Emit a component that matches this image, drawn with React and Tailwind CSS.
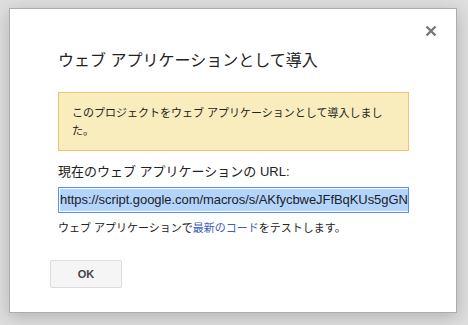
const FONT = { fontFamily: '"Liberation Sans", "Noto Sans CJK JP", sans-serif' };

const App = () => {
  return (
    <div className="w-[468px] h-[325px] bg-[#dedede] pt-[8px] pl-[9px] overflow-hidden" style={FONT}>
      <div className="relative w-[448px] h-[305px] bg-white border border-[#acacac] shadow-[0_4px_16px_rgba(0,0,0,0.2)]">
        {/* Close */}
        <button className="absolute right-[19px] top-[16px] text-[#777] w-[12px] h-[12px]">
          <svg viewBox="0 0 12 12" className="w-[12px] h-[12px]">
            <path d="M1.5 1.5 L10.5 10.5 M10.5 1.5 L1.5 10.5" stroke="#777" strokeWidth="2.4" />
          </svg>
        </button>

        <div className="pl-[48px] pr-[38px] pt-[42px]">
          <h2 className="text-[16px] leading-[20px] text-[#222] font-normal">
            ウェブ アプリケーションとして導入
          </h2>

          <div className="mt-[21px] w-[351px] bg-[#f9edbe] border border-[#f0c36d] pl-[13px] pt-[11px] pb-[10px]">
            <p className="text-[11px] leading-[18px] text-[#222]">
              このプロジェクトをウェブ アプリケーションとして導入しまし<br />た。
            </p>
          </div>

          <p className="mt-[12px] text-[13px] leading-[18px] text-[#222]">
            現在のウェブ アプリケーションの URL:
          </p>

          <div className="mt-[6px] w-[351px] h-[26px] border border-[#4d90fe] flex items-center px-px overflow-hidden whitespace-nowrap">
            <span className="bg-[#b3d4fc] text-[13px] leading-[22px] text-[#222] tracking-[-0.06px]">
              https://script.google.com/macros/s/AKfycbweJFfBqKUs5gGN
            </span>
          </div>

          <p className="mt-[7px] text-[11px] leading-[16px] text-[#222]">
            ウェブ アプリケーションで<a className="text-[#3b5fc0]">最新のコード</a>をテストします。
          </p>
        </div>

        <div className="pl-[40px] mt-[24px]">
          <button className="w-[72px] h-[28px] bg-[#f5f5f5] border border-[#dcdcdc] rounded-[2px] text-[11px] font-bold text-[#444]">
            OK
          </button>
        </div>
      </div>
    </div>
  );
};

export default App;
